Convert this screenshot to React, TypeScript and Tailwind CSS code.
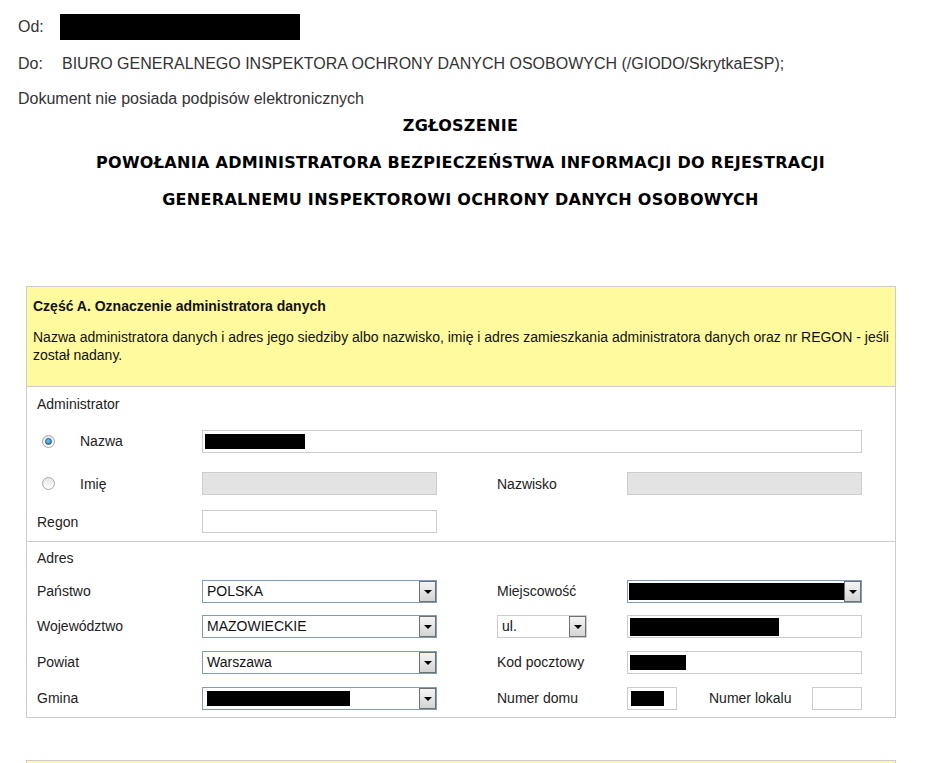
import React from 'react'

const sans = "font-['Liberation_Sans',Arial,sans-serif]"

function Redact({ w, h = 'h-[15px]' }: { w: string; h?: string }) {
  return <div className={`bg-black ${w} ${h}`} />
}

function Radio({ checked }: { checked?: boolean }) {
  return (
    <div className="w-[13px] h-[13px] rounded-full border border-[#a8a8a8] bg-gradient-to-b from-[#e6e6e6] to-[#ffffff] flex items-center justify-center">
      {checked && (
        <div className="w-[7px] h-[7px] rounded-full bg-[radial-gradient(circle_at_40%_35%,#7fc4f0,#1b6fae)] border border-[#1c5a8a]" />
      )}
    </div>
  )
}

function Arrow() {
  return (
    <div className="w-[17px] h-full border border-[#707070] bg-gradient-to-b from-[#f4f4f4] to-[#d4d4d4] flex items-center justify-center">
      <div className="w-0 h-0 border-l-[4px] border-r-[4px] border-t-[4px] border-l-transparent border-r-transparent border-t-black" />
    </div>
  )
}

function Select({ value, children, w = 'w-[235px]', border = 'border-[#7f9db9]' }: { value?: string; children?: React.ReactNode; w?: string; border?: string }) {
  return (
    <div className={`${w} h-[23px] border ${border} bg-white flex items-stretch`}>
      <div className="flex-1 flex items-center pl-[4px] text-[14px] text-[#111] overflow-hidden">
        {value}
        {children}
      </div>
      <Arrow />
    </div>
  )
}

function Input({ children, w = 'w-[235px]', gray }: { children?: React.ReactNode; w?: string; gray?: boolean }) {
  return (
    <div className={`${w} h-[23px] border border-[#cccccc] ${gray ? 'bg-[#e3e3e3]' : 'bg-white'} flex items-center pl-[2px]`}>
      {children}
    </div>
  )
}

const row = 'grid grid-cols-[165px_235px_60px_130px_235px] items-center h-[23px]'

export default function App() {
  return (
    <div className={`${sans} bg-white min-h-[763px] text-[#222] overflow-hidden`}>
      <div className="px-[18px] pt-[14px] text-[16px] text-[#333]">
        <div className="flex items-center h-[26px]">
          <span className="w-[42px]">Od:</span>
          <div className="w-[240px] h-[26px] bg-black" />
        </div>
        <div className="flex items-center mt-[12px] h-[24px]">
          <span className="w-[44px]">Do:</span>
          <span>BIURO GENERALNEGO INSPEKTORA OCHRONY DANYCH OSOBOWYCH (/GIODO/SkrytkaESP);</span>
        </div>
        <div className="mt-[13px] h-[20px] flex items-center">Dokument nie posiada podpisów elektronicznych</div>
      </div>

      {/* nagłówek zgłoszenia */}
      <div className="mx-[26px] w-[869px] font-['DejaVu_Sans',Verdana,sans-serif] font-bold text-[16px] text-black text-center tracking-[0.3px]">
        <div className="mt-[7px] h-[20px] leading-[20px]">ZGŁOSZENIE</div>
        <div className="mt-[17px] h-[20px] leading-[20px]">POWOŁANIA ADMINISTRATORA BEZPIECZEŃSTWA INFORMACJI DO REJESTRACJI</div>
        <div className="mt-[17px] h-[20px] leading-[20px]">GENERALNEMU INSPEKTOROWI OCHRONY DANYCH OSOBOWYCH</div>
      </div>

      <div className="mx-[26px] mt-[76px] w-[870px] border border-[#cccccc]">
        <div className="bg-[#fffa9e] border-b border-[#cccccc] h-[100px] px-[6px] pt-[10px] text-[14px] text-[#111]">
          <div className="font-bold h-[18px] leading-[18px]">Część A. Oznaczenie administratora danych</div>
          <div className="mt-[13px] leading-[18px]">
            Nazwa administratora danych i adres jego siedziby albo nazwisko, imię i adres zamieszkania administratora danych oraz nr REGON - jeśli został nadany.
          </div>
        </div>

        <div className="pl-[10px] text-[14px] border-b border-[#cccccc] pb-[8px]">
          <div className="h-[18px] leading-[18px] mt-[8px]">Administrator</div>
          <div className={`${row} mt-[17px]`}>
            <div className="flex items-center">
              <div className="w-[43px] pl-[5px]"><Radio checked /></div>
              <span>Nazwa</span>
            </div>
            <div className="col-span-4">
              <Input w="w-[660px]"><Redact w="w-[100px]" /></Input>
            </div>
          </div>
          <div className={`${row} mt-[18px]`}>
            <div className="flex items-center">
              <div className="w-[43px] pl-[5px]"><Radio /></div>
              <span className="mt-[3px]">Imię</span>
            </div>
            <Input gray />
            <div />
            <span className="mt-[3px]">Nazwisko</span>
            <Input gray />
          </div>
          <div className={`${row} mt-[16px]`}>
            <span className="mt-[1px]">Regon</span>
            <Input />
          </div>
        </div>

        <div className="pl-[10px] text-[14px] pb-[7px]">
          <div className="h-[18px] leading-[18px] mt-[7px]">Adres</div>
          <div className={`${row} mt-[13px]`}>
            <span>Państwo</span>
            <Select value="POLSKA" />
            <div />
            <span>Miejscowość</span>
            <Select>
              <div className="w-[216px] h-[17px] bg-black ml-[-3px]" />
            </Select>
          </div>
          <div className={`${row} mt-[12px]`}>
            <span>Województwo</span>
            <Select value="MAZOWIECKIE" />
            <div />
            <div>
              <Select value="ul." w="w-[90px]" border="border-[#cccccc]" />
            </div>
            <Input><Redact w="w-[149px]" h="h-[18px]" /></Input>
          </div>
          <div className={`${row} mt-[13px]`}>
            <span>Powiat</span>
            <Select value="Warszawa" />
            <div />
            <span>Kod pocztowy</span>
            <Input><Redact w="w-[56px]" /></Input>
          </div>
          <div className={`${row} mt-[13px]`}>
            <span>Gmina</span>
            <Select>
              <div className="w-[143px] h-[15px] bg-black" />
            </Select>
            <div />
            <span>Numer domu</span>
            <div className="flex items-center">
              <Input w="w-[50px]"><div className="ml-[1px] w-[33px] h-[15px] bg-black" /></Input>
              <span className="ml-[32px] w-[103px]">Numer lokalu</span>
              <Input w="w-[50px]" />
            </div>
          </div>
        </div>
      </div>

      <div className="mx-[26px] mt-[42px] w-[870px] h-[40px] border border-[#cccccc] bg-[#fffa9e]" />
    </div>
  )
}
